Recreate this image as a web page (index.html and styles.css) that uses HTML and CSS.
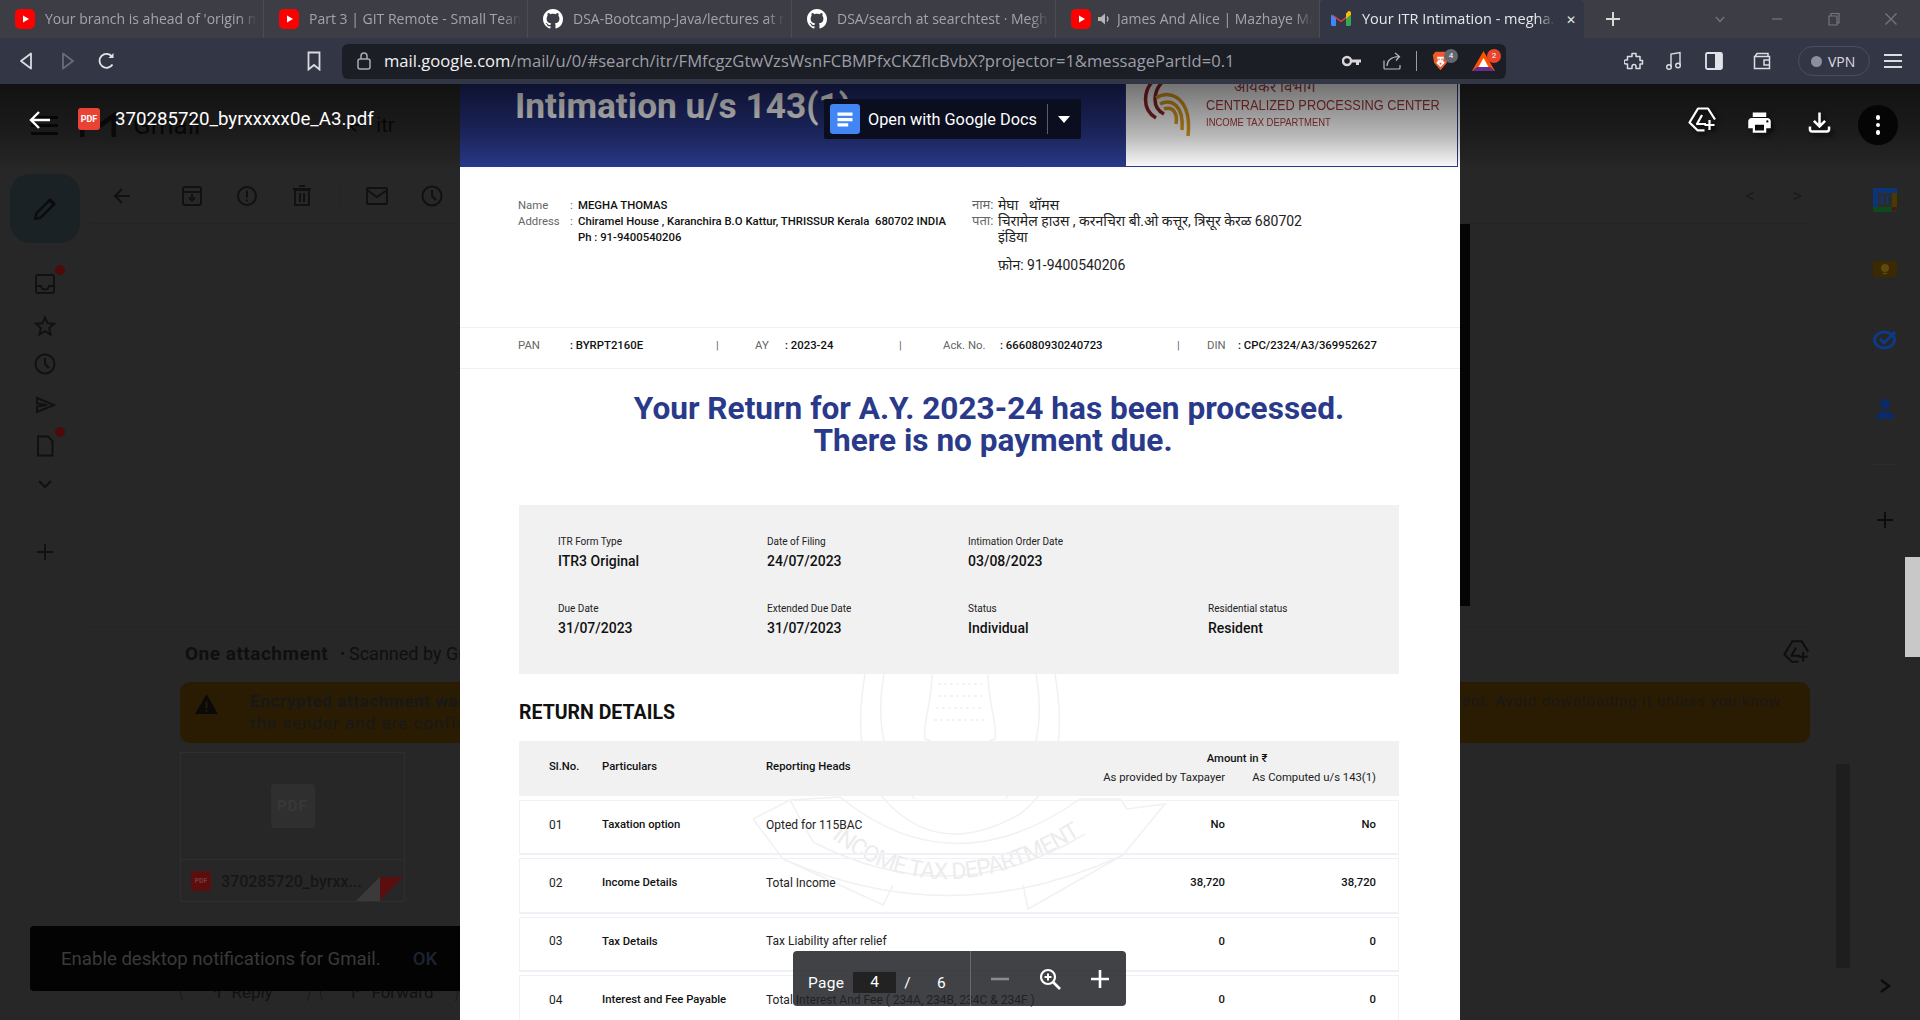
FILE: index.html
```html
<!DOCTYPE html>
<html lang="en">
<head>
    <meta charset="UTF-8">
    <title>Your ITR Intimation</title>
    <link rel="stylesheet" href="styles.css">
</head>
<body>

<svg class="defs" width="0" height="0">
    <symbol id="yt" viewBox="0 0 20 20"><rect x="0" y="0" width="20" height="20" rx="5" fill="#f00"/><path d="M8 6.500l6 3.500-6 3.500z" fill="#fff"/></symbol>
    <symbol id="gh" viewBox="0 0 16 16"><path fill="#fff" d="M8 0C3.58 0 0 3.58 0 8c0 3.54 2.29 6.53 5.47 7.59.4.07.55-.17.55-.38 0-.19-.01-.82-.01-1.49-2.01.37-2.53-.49-2.69-.94-.09-.23-.48-.94-.82-1.13-.28-.15-.68-.52-.01-.53.63-.01 1.08.58 1.23.82.72 1.21 1.87.87 2.33.66.07-.52.28-.87.51-1.07-1.78-.2-3.64-.89-3.64-3.95 0-.87.31-1.59.82-2.15-.08-.2-.36-1.02.08-2.12 0 0 .67-.21 2.2.82.64-.18 1.32-.27 2-.27.68 0 1.36.09 2 .27 1.53-1.04 2.2-.82 2.2-.82.44 1.1.16 1.92.08 2.12.51.56.82 1.27.82 2.15 0 3.07-1.87 3.75-3.65 3.95.29.25.54.73.54 1.48 0 1.07-.01 1.93-.01 2.2 0 .21.15.46.55.38A8.013 8.013 0 0016 8c0-4.42-3.58-8-8-8z"/></symbol>
    <symbol id="clock" viewBox="0 0 24 24"><circle cx="12" cy="12" r="9.500" fill="none" stroke="currentColor" stroke-width="2"/><path d="M12 6v6l4 4" fill="none" stroke="currentColor" stroke-width="2"/></symbol>
    <symbol id="driveadd" viewBox="0 0 30 30"><path d="M16.500 24.300H9.500L1.500 16.500 10 2.500h10l7 11M14 9L9 18h9" fill="none" stroke="currentColor" stroke-width="2.200" stroke-linejoin="round"/><path d="M21.500 14v10M16.500 19h10" stroke="currentColor" stroke-width="2.200"/></symbol>
</svg>

<div class="tabbar">
    <div class="tab"><svg class="fav"><use href="#yt"/></svg><span class="tab-title">Your branch is ahead of 'origin master'</span></div>
    <div class="tab"><svg class="fav"><use href="#yt"/></svg><span class="tab-title">Part 3 | GIT Remote - Small Team Workflow</span></div>
    <div class="tab"><svg class="fav"><use href="#gh"/></svg><span class="tab-title">DSA-Bootcamp-Java/lectures at main</span></div>
    <div class="tab"><svg class="fav"><use href="#gh"/></svg><span class="tab-title">DSA/search at searchtest · Megha Thomas</span></div>
    <div class="tab"><svg class="fav"><use href="#yt"/></svg>
        <svg class="speaker" viewBox="0 0 14 14"><path d="M1 5h3l4-3.500v11L4 9H1z" fill="#b5b5b5"/><path d="M10 4.500c1.200 1.500 1.200 3.500 0 5" fill="none" stroke="#b5b5b5" stroke-width="1.300"/></svg>
        <span class="tab-title">James And Alice | Mazhaye Mazhaye</span></div>
    <div class="tab tab-active">
        <svg class="fav" viewBox="0 0 20 16"><path d="M1.500 15V3.500L10 9.500l8.500-6V15h-3.500V7.500L10 11.200 5 7.500V15z" fill="#ea4335"/><path d="M0 3v10.500c0 .8.700 1.500 1.500 1.500H5V7.500L0 3.500z" fill="#4285f4"/><path d="M20 3v10.500c0 .8-.7 1.500-1.500 1.500H15V7.500l5-4z" fill="#34a853"/><path d="M15 2.500v5l5-3.700V2c0-1.600-1.900-2.500-3-1.500z" fill="#fbbc04"/></svg>
        <span class="tab-title">Your ITR Intimation - megha.thomas</span>
        <span class="tab-close">✕</span>
    </div>
    <svg class="tab-plus" viewBox="0 0 16 16"><path d="M8 1v14M1 8h14" stroke="#d8d8d8" stroke-width="2"/></svg>
    <div class="win-btns">
        <svg viewBox="0 0 14 14" class="win-i"><path d="M3 5l4 4.500L11 5" fill="none" stroke="#77787f" stroke-width="1.200"/></svg>
        <svg viewBox="0 0 14 14" class="win-i"><path d="M2 7h10" stroke="#77787f" stroke-width="1.200"/></svg>
        <svg viewBox="0 0 14 14" class="win-i"><path d="M2 4h8v9H2zM4 4V1.500h8V11h-2" fill="none" stroke="#77787f" stroke-width="1.200"/></svg>
        <svg viewBox="0 0 14 14" class="win-i"><path d="M1.500 1.500l11 11M12.500 1.500l-11 11" stroke="#77787f" stroke-width="1.200"/></svg>
    </div>
</div>

<div class="toolbar">
    <div class="nav-btns">
        <svg class="nav-i" viewBox="0 0 20 20"><path d="M14 2.500v15L4 10z" fill="none" stroke="#d9dbe2" stroke-width="1.800" stroke-linejoin="round"/></svg>
        <svg class="nav-i" viewBox="0 0 20 20"><path d="M6 2.500v15L16 10z" fill="none" stroke="#6a6c78" stroke-width="1.800" stroke-linejoin="round"/></svg>
        <svg class="nav-i" viewBox="0 0 20 20"><path d="M15.500 13.500A7 7 0 1 1 15 5.500" fill="none" stroke="#e2e3e8" stroke-width="1.900"/><path d="M16.500 2v5h-5" fill="#e2e3e8"/></svg>
    </div>
    <svg class="bookmark" viewBox="0 0 16 20"><path d="M2.500 1.500h11v17L8 14l-5.500 4.500z" fill="none" stroke="#d8dae0" stroke-width="1.800"/></svg>
    <div class="urlbar">
        <svg class="lock" viewBox="0 0 16 20"><rect x="2" y="8" width="12" height="10" rx="2" fill="none" stroke="#a9abb3" stroke-width="1.500"/><path d="M5 8V5a3 3 0 0 1 6 0v3" fill="none" stroke="#a9abb3" stroke-width="1.500"/></svg>
        <span class="url"><b>mail.google.com</b>/mail/u/0/#search/itr/FMfcgzGtwVzsWsnFCBMPfxCKZflcBvbX?projector=1&amp;messagePartId=0.1</span>
        <svg class="url-i key" viewBox="0 0 20 12"><circle cx="5" cy="6" r="4" fill="none" stroke="#d8d8d8" stroke-width="2.400"/><path d="M9 4.500h10v3h-2v2.500h-3V7.500H9z" fill="#d8d8d8"/></svg>
        <svg class="url-i share" viewBox="0 0 20 20"><path d="M2 9.500V17a1 1 0 0 0 1 1h14a1 1 0 0 0 1-1v-3" fill="none" stroke="#b9bbc2" stroke-width="1.200"/><path d="M5 15c0-6 5-9 12-9.500M13 2l4.500 3.500L14 9.500" fill="none" stroke="#b9bbc2" stroke-width="1.200"/></svg>
        <i class="url-sep"></i>
        <span class="ext-wrap ext-brave">
            <svg class="ext" viewBox="0 0 20 24"><path d="M4 1h12l3 4-1.500 9L10 23 2.500 14 1 5z" fill="#f1592a"/><path d="M6 7h8l-1 5 2 2-5 5-5-5 2-2z" fill="#fff"/><path d="M7.500 9h1.500v2H7.500zM11 9h1.500v2H11zM9 14h2v2H9z" fill="#f1592a"/></svg>
            <span class="badge badge-gray">4</span>
        </span>
        <span class="ext-wrap ext-bat">
            <svg class="ext" viewBox="0 0 23 20"><path d="M11.500 0l11.500 20H0z" fill="#ff5000"/><path d="M11.500 7l5 9h-10z" fill="#fff"/><path d="M0 20l5-4h13l5 4z" fill="#662d91"/></svg>
            <span class="badge badge-red">2</span>
        </span>
    </div>
    <div class="tool-right">
        <svg class="tool-i" viewBox="0 0 20 20"><path d="M8 2.500h4v3h4v4h2.500v3.500H16v4.500h-4v-2a2 2 0 0 0-4 0v2H3.500V13H2a2 2 0 0 1 0-4h1.500V5.500H8z" fill="none" stroke="#dcdde2" stroke-width="1.500" stroke-linejoin="round"/></svg>
        <svg class="tool-i" viewBox="0 0 20 20"><path d="M7 16V3l9-1.500V14" fill="none" stroke="#dcdde2" stroke-width="1.400"/><circle cx="5" cy="16" r="2.300" fill="none" stroke="#dcdde2" stroke-width="1.400"/><circle cx="14" cy="14.500" r="2.300" fill="none" stroke="#dcdde2" stroke-width="1.400"/></svg>
        <svg class="tool-i" viewBox="0 0 20 20"><rect x="2" y="2" width="16" height="16" rx="1.500" fill="none" stroke="#e2e3e8" stroke-width="1.800"/><rect x="11" y="2" width="7" height="16" fill="#e2e3e8"/></svg>
        <svg class="tool-i wallet" viewBox="0 0 20 20"><path d="M2.500 5.500h15v12h-15zM3 5.500l2-3h11v3" fill="none" stroke="#dcdde2" stroke-width="1.500"/><path d="M18 9h-6v5h6" fill="none" stroke="#dcdde2" stroke-width="1.500"/></svg>
        <div class="vpn"><i class="vpn-dot"></i>VPN</div>
        <div class="burger"><i></i><i></i><i></i></div>
    </div>
</div>

<main class="viewer">
    <!-- gmail behind the overlay -->
    <div class="gmail">
        <div class="gm-top">
            <span class="gm-burger"><i></i><i></i><i></i></span>
            <svg class="gm-logo" viewBox="0 0 36 28"><path d="M1 27V4l17 12L35 4v23" fill="none" stroke="#0d0d0d" stroke-width="5"/></svg>
            <span class="gm-word">Gmail</span>
            <svg class="gm-arrow" viewBox="0 0 24 24"><path d="M20 12H5M12 5l-7 7 7 7" fill="none" stroke="#0c0c0c" stroke-width="2"/></svg>
            <span class="gm-search">itr</span>
        </div>
        <aside class="rail">
            <div class="compose"><svg class="gi" viewBox="0 0 24 24"><path d="M3 21l1-5L16 4l4 4L8 20z" fill="none" stroke="#0c0c0c" stroke-width="2.200"/><path d="M15 3l2-1 5 5-1 2z" fill="#0c0c0c"/></svg></div>
            <div class="rail-i i-inbox has-dot"><svg class="gi" viewBox="0 0 24 24"><rect x="3" y="3" width="18" height="18" rx="2" fill="none" stroke="#111" stroke-width="2"/><path d="M3 14h5c0 2 2 3.500 4 3.500s4-1.500 4-3.500h5" fill="none" stroke="#111" stroke-width="2"/></svg></div>
            <div class="rail-i i-star"><svg class="gi" viewBox="0 0 24 24"><path d="M12 3.500l2.600 5.800 6.400.6-4.800 4.200 1.400 6.300-5.600-3.300-5.600 3.300 1.400-6.300L3 9.900l6.400-.6z" fill="none" stroke="#111" stroke-width="2"/></svg></div>
            <div class="rail-i i-clock"><svg class="gi"><use href="#clock"/></svg></div>
            <div class="rail-i i-send"><svg class="gi" viewBox="0 0 24 24"><path d="M4 5l17 7-17 7v-5.500L14 12 4 10.500z" fill="none" stroke="#111" stroke-width="2"/></svg></div>
            <div class="rail-i i-draft has-dot"><svg class="gi" viewBox="0 0 24 24"><path d="M5 2.500h10l4.500 4.500v14.500H5z" fill="none" stroke="#111" stroke-width="2"/></svg></div>
            <div class="rail-i i-more"><svg class="gi" viewBox="0 0 24 24"><path d="M6 9l6 6 6-6" fill="none" stroke="#111" stroke-width="2"/></svg></div>
            <div class="rail-i i-plus"><svg class="gi" viewBox="0 0 24 24"><path d="M12 4v16M4 12h16" stroke="#111" stroke-width="2"/></svg></div>
        </aside>
        <section class="mailbox">
            <div class="mail-tools">
                <svg class="gi t-back" viewBox="0 0 24 24"><path d="M20 12H5M12 5l-7 7 7 7" fill="none" stroke="#111" stroke-width="2"/></svg>
                <svg class="gi t-archive" viewBox="0 0 24 24"><rect x="3" y="3" width="18" height="18" rx="2" fill="none" stroke="#111" stroke-width="2"/><path d="M3 8h18M12 10v6M9 13.500l3 3 3-3" fill="none" stroke="#111" stroke-width="2"/></svg>
                <svg class="gi" viewBox="0 0 24 24"><circle cx="12" cy="12" r="9" fill="none" stroke="#111" stroke-width="2"/><path d="M12 6.500v7M12 15.500v2" stroke="#111" stroke-width="2"/></svg>
                <svg class="gi" viewBox="0 0 24 24"><path d="M5 6h14v15H5zM3 5h18M9 2h6M10 9v9M14 9v9" fill="none" stroke="#111" stroke-width="2"/></svg>
                <i class="tool-sep"></i>
                <svg class="gi" viewBox="0 0 24 24"><rect x="2" y="4" width="20" height="16" rx="1" fill="none" stroke="#111" stroke-width="2"/><path d="M2 6l10 7 10-7" fill="none" stroke="#111" stroke-width="2"/></svg>
                <svg class="gi"><use href="#clock"/></svg>
                <span class="pager"><i>&lt;</i><i>&gt;</i></span>
            </div>
            <div class="mail-body">
                <div class="att-head">
                    <b>One attachment</b><span class="dot-sep">•</span><span>Scanned by Gmail</span>
                    <svg class="att-drive"><use href="#driveadd"/></svg>
                </div>
                <div class="warn">
                    <svg class="warn-i" viewBox="0 0 24 21"><path d="M12 0l12 21H0z" fill="#0a0a0a"/><path d="M11 8h2v7h-2zM11 16.500h2v2h-2z" fill="#2a1c02"/></svg>
                    <div class="warn-text">
                        <p class="warn-line"><b>Encrypted attachment warning</b><span>– Be careful with this attachment. It contains encrypted content. Avoid downloading it unless you know</span></p>
                        <p class="warn-sub">the sender and are confident about this attachment</p>
                    </div>
                </div>
                <div class="att-card">
                    <div class="att-thumb"><span class="att-tile">PDF</span></div>
                    <div class="att-foot">
                        <span class="pdf-mini">PDF</span>
                        <span class="att-name">370285720_byrxx...</span>
                    </div>
                    <i class="fold-grey"></i><i class="fold-red"></i>
                </div>
                <div class="replies">
                    <span class="reply-btn btn-reply">↰ &nbsp;Reply</span>
                    <span class="reply-btn btn-forward">↱ &nbsp;Forward</span>
                </div>
            </div>
        </section>
        <aside class="apps">
            <svg class="app-svg app-cal" viewBox="0 0 24 24"><rect width="24" height="24" rx="2" fill="#2c2c2c"/><path d="M0 0h24v5H5v14H0z" fill="#0c3478"/><path d="M19 5h5v14h-5z" fill="#4a3a02"/><path d="M5 19h14v5H2a2 2 0 0 1-2-2v-3z" fill="#0b4a1a"/><path d="M19 19h5l-5 5z" fill="#5b0e0e"/><text x="12" y="16" class="cal-num">31</text></svg>
            <svg class="app-svg app-keep" viewBox="0 0 24 16"><rect width="24" height="16" rx="2" fill="#3b2a00"/><circle cx="12" cy="7" r="4" fill="#5c4a10"/><path d="M10 12.500h4" stroke="#5c4a10" stroke-width="1.500"/></svg>
            <svg class="app-svg app-tasks" viewBox="0 0 24 20"><ellipse cx="11.500" cy="11" rx="10" ry="8" fill="none" stroke="#0c3a86" stroke-width="3"/><path d="M7 10l4 4 11-11" fill="none" stroke="#0c3a86" stroke-width="3"/></svg>
            <svg class="app-svg app-people" viewBox="0 0 24 22"><circle cx="12" cy="6" r="5" fill="#0b2a66"/><path d="M3 21c0-6 4-8 9-8s9 2 9 8z" fill="#0b2a66"/></svg>
            <i class="app-sep"></i>
            <svg class="app-svg app-plus" viewBox="0 0 24 24"><path d="M12 4v16M4 12h16" stroke="#0c0c0c" stroke-width="2"/></svg>
            <svg class="app-svg app-next" viewBox="0 0 24 24"><path d="M8 6l8 6-8 6" fill="none" stroke="#0c0c0c" stroke-width="2.400"/></svg>
        </aside>
        <i class="mail-scroll"></i>
        <i class="msg-scroll"></i>
        <div class="snack">
            <span>Enable desktop notifications for Gmail.</span>
            <span class="snack-ok">OK</span>
        </div>
    </div>

    <i class="thumb"></i>

    <!-- the pdf page -->
    <article class="page">
        <svg class="emblem" viewBox="280 585 440 260">
            <defs><path id="arc" d="M366 748L373 755Q484 840 630 745L640 738"/></defs>
            <g fill="none" stroke="#f1f1f1" stroke-width="1.500">
                <path d="M293 735L330 716L353 758M330 716L380 713Q493 805 620 715L660 715L667 725L705 720L663 771Q493 850 323 775L293 735"/>
                <path d="M353 758Q493 830 625 750"/>
                <path d="M323 775L423 821L433 801M663 771L568 825L563 801"/>
                <path d="M405 590C395 650 400 700 440 730Q490 770 560 730C600 700 605 650 595 590"/>
                <path d="M424 590C415 640 425 690 455 715M576 590C585 640 575 690 545 715"/>
                <path d="M472 590C472 620 462 640 465 655Q500 670 535 655C538 640 528 620 528 590"/>
                <path d="M478 600h44M478 612h44M476 624h48M474 636h52" stroke-dasharray="3 3"/>
            </g>
            <text class="emblem-text"><textPath href="#arc" startOffset="8" textLength="268">INCOME TAX DEPARTMENT</textPath></text>
        </svg>
        <header class="pdf-head">
            <div class="head-blue"><span class="head-title">Intimation u/s 143(1)</span></div>
            <div class="head-cpc">
                <svg class="cpc-logo" viewBox="0 0 56 64">
                    <g fill="none" stroke-width="3.500">
                        <path d="M16 2C2 14 2 34 16 42" stroke="#8f2327"/>
                        <path d="M24 4C12 16 12 32 24 38" stroke="#8f2327"/>
                        <path d="M16 22C32 12 52 24 48 60" stroke="#d99a21"/>
                        <path d="M20 28C32 22 44 30 42 54" stroke="#d99a21"/>
                        <path d="M24 33C32 30 38 36 36 48" stroke="#d99a21"/>
                    </g>
                </svg>
                <div class="cpc-text">
                    <span class="cpc-top">आयकर विभाग</span>
                    <span class="cpc-name">CENTRALIZED PROCESSING CENTER</span>
                    <span class="cpc-sub">INCOME TAX DEPARTMENT</span>
                </div>
            </div>
        </header>

        <section class="addr">
            <div class="addr-en">
                <span class="lbl">Name</span><span class="lbl">:</span><b>MEGHA THOMAS</b>
                <span class="lbl">Address</span><span class="lbl">:</span><b>Chiramel House , Karanchira B.O Kattur, THRISSUR Kerala &nbsp;680702 INDIA</b>
                <span></span><span></span><b>Ph : 91-9400540206</b>
            </div>
            <div class="addr-hi">
                <span class="lbl">नाम:</span><span>मेघा &nbsp; थॉमस</span>
                <span class="lbl">पता:</span><span>चिरामेल हाउस , करनचिरा बी.ओ कत्तूर, त्रिसूर केरळ 680702<br>इंडिया</span>
                <span></span><span class="hi-phone">फ़ोन: 91-9400540206</span>
            </div>
        </section>

        <section class="idrow">
            <span class="lbl">PAN</span><b>: BYRPT2160E</b><span class="lbl">|</span>
            <span class="lbl">AY</span><b>: 2023-24</b><span class="lbl">|</span>
            <span class="lbl">Ack. No.</span><b>: 666080930240723</b><span class="lbl">|</span>
            <span class="lbl">DIN</span><b class="din">: CPC/2324/A3/369952627</b>
        </section>

        <h2 class="status">Your Return for A.Y. 2023-24 has been processed.<span class="status-2">There is no payment due.</span></h2>

        <section class="facts">
            <div><small>ITR Form Type</small><strong>ITR3 Original</strong></div>
            <div><small>Date of Filing</small><strong>24/07/2023</strong></div>
            <div><small>Intimation Order Date</small><strong>03/08/2023</strong></div>
            <div></div>
            <div><small>Due Date</small><strong>31/07/2023</strong></div>
            <div><small>Extended Due Date</small><strong>31/07/2023</strong></div>
            <div><small>Status</small><strong>Individual</strong></div>
            <div><small>Residential status</small><strong>Resident</strong></div>
        </section>

        <h3 class="ret-title">RETURN DETAILS</h3>

        <section class="ret-table">
            <div class="ret-head">
                <b>Sl.No.</b><b>Particulars</b><b>Reporting Heads</b>
                <div class="amt-head">
                    <b class="amt-title">Amount in ₹</b>
                    <div class="amt-cols"><span>As provided by Taxpayer</span><span>As Computed u/s 143(1)</span></div>
                </div>
            </div>
            <div class="ret-row"><span>01</span><b>Taxation option</b><span>Opted for 115BAC</span><b class="num">No</b><b class="num">No</b></div>
            <div class="ret-row"><span>02</span><b>Income Details</b><span>Total Income</span><b class="num">38,720</b><b class="num">38,720</b></div>
            <div class="ret-row"><span>03</span><b>Tax Details</b><span>Tax Liability after relief</span><b class="num">0</b><b class="num">0</b></div>
            <div class="ret-row"><span>04</span><b>Interest and Fee Payable</b><span>Total Interest And Fee ( 234A, 234B, 234C &amp; 234F )</span><b class="num">0</b><b class="num">0</b></div>
        </section>
    </article>

    <!-- viewer chrome on top of the pdf -->
    <div class="vhead">
        <svg class="v-back" viewBox="0 0 24 24"><path d="M22 12H4M11 4l-8 8 8 8" fill="none" stroke="#fff" stroke-width="2.400"/></svg>
        <span class="v-pdf">PDF</span>
        <span class="v-name">370285720_byrxxxxx0e_A3.pdf</span>
        <div class="v-actions">
            <svg class="v-act v-drive"><use href="#driveadd"/></svg>
            <svg class="v-act v-print" viewBox="0 0 24 24"><path fill="#fff" d="M19 8H5c-1.660 0-3 1.340-3 3v6h4v4h12v-4h4v-6c0-1.660-1.340-3-3-3zm-3 11H8v-5h8v5zm3-7c-.55 0-1-.45-1-1s.45-1 1-1 1 .45 1 1-.45 1-1 1zm-1-9H6v4h12V3z"/></svg>
            <svg class="v-act v-down" viewBox="0 0 24 24"><path d="M12 3v12M7 10.500l5 5 5-5M3.500 15.500v2.500a2 2 0 0 0 2 2h13a2 2 0 0 0 2-2v-2.500" fill="none" stroke="#fff" stroke-width="2.200"/></svg>
            <span class="v-more"><i></i><i></i><i></i></span>
        </div>
    </div>

    <div class="docs-btn">
        <svg class="docs-i" viewBox="0 0 28 28"><rect width="28" height="28" rx="3" fill="#4285f4"/><path d="M7 8h14v3H7zM7 13h14v3H7zM7 18h10v3H7z" fill="#fff"/></svg>
        <span>Open with Google Docs</span>
        <i class="docs-sep"></i>
        <i class="docs-caret"></i>
    </div>

    <div class="pagebar">
        <div class="pb-pages">
            <span>Page</span><span class="pb-input">4</span><span class="pb-slash">/</span><span class="pb-total">6</span>
        </div>
        <div class="pb-zoom">
            <svg class="pb-i" viewBox="0 0 24 24"><path d="M3 12h18" stroke="#8b8b8b" stroke-width="2.600"/></svg>
            <svg class="pb-i" viewBox="0 0 24 24"><circle cx="10" cy="10" r="7" fill="none" stroke="#fff" stroke-width="2.200"/><path d="M15 15l7 7" stroke="#fff" stroke-width="2.600"/><path d="M10 6.500v7M6.500 10h7" stroke="#fff" stroke-width="2"/></svg>
            <svg class="pb-i" viewBox="0 0 24 24"><path d="M12 3v18M3 12h18" stroke="#fff" stroke-width="2.600"/></svg>
        </div>
    </div>
</main>

</body>
</html>
```

FILE: styles.css
```css
* {
    box-sizing: border-box;
}

html, body {
    margin: 0;
    height: 100%;
    overflow: hidden;
}

body {
    display: flex;
    flex-direction: column;
    background: #272727;
    font-family: Roboto, "Noto Sans", sans-serif;
}

i {
    font-style: normal;
}

.defs {
    position: absolute;
}

/* browser tabs */
.tabbar {
    display: flex;
    align-items: center;
    height: 38px;
    background: #3c3d45;
    font-family: "Open Sans", sans-serif;
    flex: none;
}

.tab {
    display: flex;
    align-items: center;
    gap: 10px;
    width: 264px;
    height: 38px;
    padding: 0 6px 0 15px;
    border-right: 1px solid #4a4b53;
    color: #a4a5ab;
    font-size: 14px;
}

.tab:nth-child(5) {
    gap: 6px;
}

.tab-active {
    background: #333645;
    border-right: 0;
    border-radius: 6px 6px 0 0;
    color: #e6e7ea;
    padding-left: 11px;
    gap: 11px;
}

.tab-title {
    flex: 1;
    margin-top: -2px;
    overflow: hidden;
    white-space: nowrap;
    -webkit-mask-image: linear-gradient(to left, transparent 0, #000 18px);
    mask-image: linear-gradient(to left, transparent 0, #000 18px);
}

.tab-active .tab-title {
    font-size: 14.500px;
}

.fav {
    width: 20px;
    height: 20px;
    flex: none;
}

.speaker {
    width: 14px;
    height: 14px;
    flex: none;
}

.tab-close {
    color: #e6e7ea;
    font-size: 12px;
    margin-right: 2px;
}

.tab-plus {
    width: 16px;
    height: 16px;
    margin-left: 21px;
}

.win-btns {
    display: flex;
    gap: 43px;
    margin-left: 92px;
}

.win-i {
    width: 14px;
    height: 14px;
}

/* address bar row */
.toolbar {
    display: flex;
    align-items: center;
    height: 46px;
    background: #333645;
    flex: none;
}

.nav-btns {
    display: flex;
    gap: 20px;
    padding-left: 17px;
}

.nav-i {
    width: 20px;
    height: 20px;
}

.bookmark {
    width: 16px;
    height: 20px;
    margin-left: 189px;
}

.urlbar {
    display: flex;
    align-items: center;
    width: 1164px;
    height: 35px;
    margin-left: 20px;
    padding: 0 0 0 14px;
    background: #1c1e26;
    border-radius: 6px;
}

.lock {
    width: 16px;
    height: 20px;
    flex: none;
}

.url {
    margin: -2px 0 0 12px;
    width: 958px;
    flex: none;
    overflow: hidden;
    white-space: nowrap;
    color: #9c9ea6;
    font-family: "Open Sans", sans-serif;
    font-size: 16.600px;
}

.url b {
    color: #f2f2f2;
    font-weight: 400;
}

.url-i {
    flex: none;
}

.key {
    width: 20px;
    height: 12px;
}

.share {
    width: 20px;
    height: 20px;
    margin-left: 20px;
}

.url-sep {
    width: 1px;
    height: 20px;
    background: #9c9ea6;
    margin: 0 15px 0 14px;
}

.ext-wrap {
    position: relative;
    display: block;
    height: 22px;
}

.ext-brave {
    width: 17px;
    margin-right: 23px;
}

.ext-bat {
    width: 23px;
}

.ext {
    display: block;
    width: 100%;
    height: 22px;
}

.badge {
    position: absolute;
    top: -1px;
    width: 14px;
    height: 14px;
    border-radius: 50%;
    color: #fff;
    font-size: 8px;
    line-height: 14px;
    text-align: center;
}

.badge-gray {
    right: -9px;
    background: #63656f;
}

.badge-red {
    right: -6px;
    background: #e8452c;
}

.tool-right {
    display: flex;
    align-items: center;
    margin-left: 118px;
}

.tool-i {
    width: 20px;
    height: 20px;
    margin-right: 20px;
}

.wallet {
    margin-left: 8px;
    margin-right: 26px;
}

.vpn {
    display: flex;
    align-items: center;
    gap: 6px;
    width: 72px;
    height: 30px;
    padding-left: 12px;
    border: 1px solid #4a4d5c;
    border-radius: 15px;
    color: #dcdde2;
    font-family: "Open Sans", sans-serif;
    font-size: 14px;
}

.vpn-dot {
    width: 11px;
    height: 11px;
    border-radius: 50%;
    background: #8d909c;
}

.burger {
    display: flex;
    flex-direction: column;
    gap: 4px;
    margin-left: 14px;
}

.burger i {
    width: 18px;
    height: 2px;
    background: #dcdde2;
}

/* viewer area */
.viewer {
    position: relative;
    flex: 1;
    overflow: hidden;
}

.gmail {
    position: relative;
    display: flex;
    height: 100%;
    background: #272727;
    color: #0f0f0f;
}

.gm-top {
    position: absolute;
    left: 31px;
    top: 24px;
    display: flex;
    align-items: center;
    height: 34px;
    color: #0a0a0a;
}

.gm-burger {
    display: flex;
    flex-direction: column;
    gap: 5px;
    width: 27px;
}

.gm-burger i {
    height: 3px;
    background: #0a0a0a;
}

.gm-logo {
    width: 36px;
    height: 26px;
    margin-left: 22px;
}

.gm-word {
    margin-left: 17px;
    font-size: 26px;
}

.gm-arrow {
    width: 22px;
    height: 22px;
    margin-left: 145px;
}

.gm-search {
    margin-left: 9px;
    font-size: 20px;
}

.gi {
    width: 24px;
    height: 24px;
    color: #111;
    flex: none;
}

.rail {
    width: 90px;
    flex: none;
    padding: 90px 0 0 10px;
}

.compose {
    display: flex;
    align-items: center;
    justify-content: center;
    width: 70px;
    height: 69px;
    background: #1a2226;
    border-radius: 20px;
}

.compose .gi {
    width: 26px;
    height: 26px;
}

.rail-i {
    position: relative;
    display: flex;
    justify-content: center;
    width: 70px;
    height: 24px;
}

.i-inbox {
    margin-top: 29px;
}

.i-star {
    margin-top: 18px;
}

.i-clock {
    margin-top: 14px;
}

.i-send,
.i-draft {
    margin-top: 17px;
}

.i-more {
    margin-top: 14px;
}

.i-plus {
    margin-top: 44px;
}

.has-dot::after {
    content: "";
    position: absolute;
    top: -7px;
    left: 45px;
    width: 10px;
    height: 10px;
    border-radius: 50%;
    background: #4d0b0b;
}

.mailbox {
    flex: 1;
    min-width: 0;
    padding-right: 40px;
}

.mail-tools {
    display: flex;
    align-items: center;
    gap: 31px;
    height: 56px;
    margin-top: 84px;
    padding: 0 0 0 20px;
    border-bottom: 1px solid #242424;
}

.t-archive {
    margin-left: 15px;
}

.tool-sep {
    width: 1px;
    height: 24px;
    background: #232323;
    margin: 0 -6px;
}

.pager {
    display: flex;
    gap: 38px;
    margin-left: auto;
    margin-right: 8px;
    color: #1a1a1a;
    font-size: 18px;
}

.mail-body {
    margin-top: 402px;
    padding-left: 90px;
    border-top: 1px dotted #222;
    padding-top: 29px;
}

.att-head {
    position: relative;
    display: flex;
    align-items: center;
    height: 27px;
    margin-top: -16px;
    padding-left: 5px;
    font-size: 18px;
    color: #0f0f0f;
}

.att-head b {
    font-size: 19px;
    font-weight: 700;
    letter-spacing: .5px;
}

.dot-sep {
    margin: 0 4px 0 12px;
    font-size: 14px;
}

.att-drive {
    position: absolute;
    left: 1603px;
    top: -1px;
    width: 28px;
    height: 28px;
    color: #0f0f0f;
}

.warn {
    display: flex;
    gap: 32px;
    height: 61px;
    margin-top: 15px;
    padding: 12px 0 0 15px;
    background: #2a1c02;
    border-radius: 10px;
    color: #181818;
    white-space: nowrap;
    overflow: hidden;
}

.warn-i {
    width: 23px;
    height: 20px;
    flex: none;
}

.warn-text {
    margin-top: -4px;
}

.warn-text p {
    margin: 0;
    line-height: 22px;
    font-size: 17px;
}

.warn-line {
    display: flex;
    justify-content: space-between;
    width: 1531px;
}

.warn-line b {
    letter-spacing: .6px;
}

.warn-line span {
    font-size: 15px;
    letter-spacing: .9px;
}

.warn-sub {
    letter-spacing: 1px;
}

.att-card {
    position: relative;
    width: 225px;
    height: 150px;
    margin-top: 9px;
    border: 1px solid #2e2e2e;
}

.att-thumb {
    display: flex;
    align-items: center;
    justify-content: center;
    height: 107px;
    border-bottom: 1px solid #2e2e2e;
}

.att-tile {
    width: 44px;
    height: 44px;
    background: #2f2f2f;
    border-radius: 4px;
    color: #383838;
    font-size: 15px;
    font-weight: 700;
    line-height: 44px;
    text-align: center;
    letter-spacing: 1px;
}

.att-foot {
    display: flex;
    align-items: center;
    gap: 10px;
    height: 42px;
    padding-left: 10px;
}

.pdf-mini {
    width: 20px;
    height: 20px;
    background: #5b0e0e;
    color: #7a3a3a;
    font-size: 7px;
    font-weight: 700;
    line-height: 20px;
    text-align: center;
    border-radius: 2px;
}

.att-name {
    color: #161616;
    font-size: 16px;
    font-weight: 500;
}

.fold-grey {
    position: absolute;
    right: 24px;
    bottom: 0;
    width: 0;
    height: 0;
    border-style: solid;
    border-width: 0 0 24px 24px;
    border-color: transparent transparent #3a3a3a transparent;
}

.fold-red {
    position: absolute;
    right: 1px;
    bottom: 1px;
    width: 0;
    height: 0;
    border-style: solid;
    border-width: 23px 23px 0 0;
    border-color: #5b0e0e transparent transparent transparent;
}

.replies {
    display: flex;
    gap: 10px;
    height: 26px;
    margin-top: 73px;
    overflow: hidden;
}

.reply-btn {
    flex: none;
    height: 40px;
    margin-top: -3px;
    padding: 9px 0 0 28px;
    border: 1px solid #1a1a1a;
    border-radius: 20px;
    color: #111;
    font-size: 17px;
}

.btn-reply {
    width: 130px;
}

.btn-forward {
    width: 138px;
}

.apps {
    position: relative;
    width: 70px;
    flex: none;
}

.app-svg {
    position: absolute;
    left: 23px;
    width: 24px;
    height: 24px;
}

.cal-num {
    fill: #0c3478;
    font-size: 10px;
    font-weight: 700;
    text-anchor: middle;
}

.app-cal { top: 104px; }
.app-keep { top: 173px; }
.app-tasks { top: 243px; }
.app-people { top: 313px; }
.app-plus { top: 424px; }
.app-next { top: 890px; }

.app-sep {
    position: absolute;
    top: 380px;
    left: 23px;
    width: 24px;
    height: 1px;
    background: #2c2c2c;
}

.mail-scroll {
    position: absolute;
    right: 70px;
    top: 680px;
    width: 14px;
    height: 204px;
    background: #1e1e1e;
}

.msg-scroll {
    position: absolute;
    left: 1460px;
    top: 140px;
    width: 10px;
    height: 382px;
    background: #050505;
}

.thumb {
    position: absolute;
    right: 0;
    top: 473px;
    width: 15px;
    height: 100px;
    background: #c8c8c8;
}

.snack {
    position: absolute;
    left: 30px;
    top: 842px;
    display: flex;
    align-items: center;
    gap: 32px;
    width: 480px;
    height: 65px;
    padding-left: 31px;
    background: #030303;
    border-radius: 4px;
    color: #3a3a3a;
    font-size: 18.600px;
}

.snack-ok {
    color: #1c2433;
    font-weight: 500;
}

/* pdf */
.page {
    position: absolute;
    top: 0;
    left: 460px;
    width: 1000px;
    height: 936px;
    overflow: hidden;
    background: #fff;
    color: #111;
}

.page > * {
    position: relative;
}

.emblem {
    position: absolute;
    left: 280px;
    top: 585px;
    width: 440px;
    height: 260px;
}

.emblem-text {
    fill: #ececec;
    font-size: 23px;
}

.pdf-head {
    display: flex;
    height: 83px;
}

.head-blue {
    width: 665px;
    padding: 0 0 0 55px;
    background: linear-gradient(#20296e, #2a3a8c);
}

.head-title {
    display: block;
    padding-top: 1px;
    color: #fff;
    font-size: 35.300px;
    font-weight: 700;
    line-height: 42px;
}

.head-cpc {
    display: flex;
    gap: 10px;
    width: 333px;
    padding: 0 0 0 14px;
    background: #fff;
    border: 1px solid #2a3a8c;
    border-top: 0;
    overflow: hidden;
}

.cpc-logo {
    flex: none;
    width: 56px;
    height: 64px;
    margin-top: -8px;
}

.cpc-text {
    display: flex;
    flex-direction: column;
    color: #a53a3f;
    font-family: "Liberation Sans", sans-serif;
    white-space: nowrap;
}

.cpc-top {
    height: 12px;
    margin: -3px 0 0 28px;
    font-size: 15px;
    line-height: 12px;
}

.cpc-name {
    margin-top: 2px;
    font-size: 15.500px;
    line-height: 20px;
    transform: scaleX(.825);
    transform-origin: left;
}

.cpc-sub {
    font-size: 10.500px;
    line-height: 14px;
    transform: scaleX(.9);
    transform-origin: left;
}

.lbl {
    color: #666;
    font-weight: 400;
}

.addr {
    display: flex;
    height: 160px;
    padding: 30px 0 0 58px;
    font-size: 11.350px;
    line-height: 16px;
}

.addr b,
.idrow b {
    font-weight: 500;
}

.addr-en {
    display: grid;
    grid-template-columns: 52px 8px auto;
    grid-auto-rows: 16px;
    width: 454px;
    white-space: nowrap;
}

.addr-hi {
    display: grid;
    grid-template-columns: 26px auto;
    align-content: start;
    font-size: 14px;
    color: #222;
    line-height: 16px;
}

.addr-hi .lbl {
    font-size: 13px;
}

.hi-phone {
    margin-top: 12px;
}

.idrow {
    display: grid;
    grid-template-columns: 52px 146px 39px 30px 114px 44px 57px 177px 30px 31px auto;
    align-items: center;
    height: 42px;
    padding: 0 0 7px 58px;
    border-top: 1px solid #f0f0f6;
    border-bottom: 1px solid #f0f0f6;
    font-size: 11.350px;
    white-space: nowrap;
}

.status {
    margin: 24px 0 0 58px;
    color: #2a3a8a;
    font-size: 31.600px;
    font-weight: 700;
    line-height: 32px;
    text-align: center;
}

.status-2 {
    display: block;
    padding-left: 8px;
}

.facts {
    display: grid;
    grid-template-columns: 209px 201px 240px auto;
    grid-template-rows: 35px 35px;
    row-gap: 32px;
    width: 880px;
    height: 169px;
    margin: 48px 0 0 59px;
    padding: 30px 0 0 39px;
    background: #f1f1f1;
}

.facts small {
    display: block;
    height: 17px;
    font-size: 10px;
    line-height: 14px;
    color: #222;
}

.facts strong {
    display: block;
    font-size: 14px;
    font-weight: 500;
    line-height: 18px;
}

.ret-title {
    margin: 27px 0 0 59px;
    font-size: 19.500px;
    font-weight: 700;
    line-height: 24px;
}

.ret-table {
    display: flex;
    flex-direction: column;
    gap: 3px;
    width: 880px;
    margin: 16px 0 0 59px;
    font-size: 11.300px;
}

.ret-table b {
    font-weight: 500;
}

.ret-head,
.ret-row {
    display: grid;
    grid-template-columns: 53px 164px 308px 151px 151px;
    align-items: center;
    padding: 0 23px 0 30px;
}

.ret-head {
    height: 55px;
    margin-bottom: 1px;
    background: #f1f1f1;
    padding-bottom: 5px;
}

.amt-head {
    grid-column: 4 / 6;
    margin-top: 3px;
}

.amt-title {
    display: block;
    padding-left: 24px;
    text-align: center;
    line-height: 16px;
}

.amt-cols {
    display: grid;
    grid-template-columns: 151px 151px;
    margin-top: 4px;
    line-height: 14px;
    color: #222;
    text-align: right;
    white-space: nowrap;
}

.ret-row {
    height: 55.300px;
    padding-bottom: 5px;
    border: 1px solid #f0f0f6;
    border-bottom-width: 2px;
    padding-left: 29px;
    padding-right: 22px;
}

.ret-row span {
    color: #222;
}

.ret-row span:nth-child(3) {
    font-size: 12px;
}

.ret-row span:first-child {
    font-size: 12px;
}

.num {
    text-align: right;
}

/* viewer chrome */
.vhead {
    position: absolute;
    top: 0;
    left: 0;
    right: 0;
    height: 86px;
    padding: 20px 0 0 28px;
    display: flex;
    align-items: flex-start;
    background: linear-gradient(rgba(0, 0, 0, .55), rgba(0, 0, 0, .28) 60%, rgba(0, 0, 0, 0));
}

.v-back {
    width: 24px;
    height: 24px;
    margin-top: 4px;
}

.v-pdf {
    flex: none;
    width: 22px;
    height: 22px;
    margin: 4px 0 0 26px;
    background: #ea4335;
    border-radius: 3px;
    color: #fff;
    font-size: 9px;
    font-weight: 700;
    line-height: 22px;
    text-align: center;
}

.v-name {
    margin: 3px 0 0 15px;
    color: #fff;
    font-size: 18.700px;
    line-height: 24px;
}

.v-actions {
    position: absolute;
    right: 22px;
    top: 16px;
    display: flex;
    align-items: center;
}

.v-act {
    width: 27px;
    height: 27px;
    color: #fff;
    filter: drop-shadow(3px 3px 2px rgba(0, 0, 0, .7));
}

.v-drive {
    width: 30px;
    height: 30px;
    margin-top: -3px;
}

.v-print {
    margin-left: 28px;
}

.v-down {
    margin-left: 33px;
}

.v-more {
    display: flex;
    flex-direction: column;
    align-items: center;
    justify-content: center;
    gap: 3px;
    width: 40px;
    height: 40px;
    margin-left: 25px;
    margin-top: 5px;
    background: #050505;
    border-radius: 50%;
}

.v-more i {
    width: 4.500px;
    height: 4.500px;
    background: #fff;
    border-radius: 50%;
}

.docs-btn {
    position: absolute;
    left: 824px;
    top: 15px;
    display: flex;
    align-items: center;
    width: 257px;
    height: 40px;
    padding-left: 6px;
    background: #0a0e1f;
    border-radius: 2px;
    color: #fff;
    font-size: 16.300px;
    white-space: nowrap;
}

.docs-i {
    width: 30px;
    height: 30px;
    margin-right: 8px;
}

.docs-sep {
    width: 1px;
    height: 30px;
    margin-left: 10px;
    background: #5c5f6a;
}

.docs-caret {
    width: 0;
    height: 0;
    margin-left: 10px;
    border-style: solid;
    border-width: 7px 6.500px 0 6.500px;
    border-color: #fff transparent transparent transparent;
}

.pagebar {
    position: absolute;
    left: 793px;
    top: 867px;
    display: flex;
    width: 333px;
    height: 55px;
    background: rgba(32, 33, 36, .85);
    border-radius: 4px;
    color: #fff;
}

.pb-pages {
    display: flex;
    align-items: center;
    width: 178px;
    height: 100%;
    padding: 8px 0 0 15px;
    border-right: 1px solid #6a6a6a;
    font-size: 15.500px;
    letter-spacing: .3px;
}

.pb-input {
    width: 43px;
    height: 21px;
    margin-left: 9px;
    background: #222;
    line-height: 21px;
    text-align: center;
}

.pb-slash {
    margin-left: 8px;
}

.pb-total {
    margin-left: 26px;
}

.pb-zoom {
    display: flex;
    align-items: center;
    gap: 26px;
    padding-left: 17px;
}

.pb-i {
    width: 24px;
    height: 24px;
}
```
